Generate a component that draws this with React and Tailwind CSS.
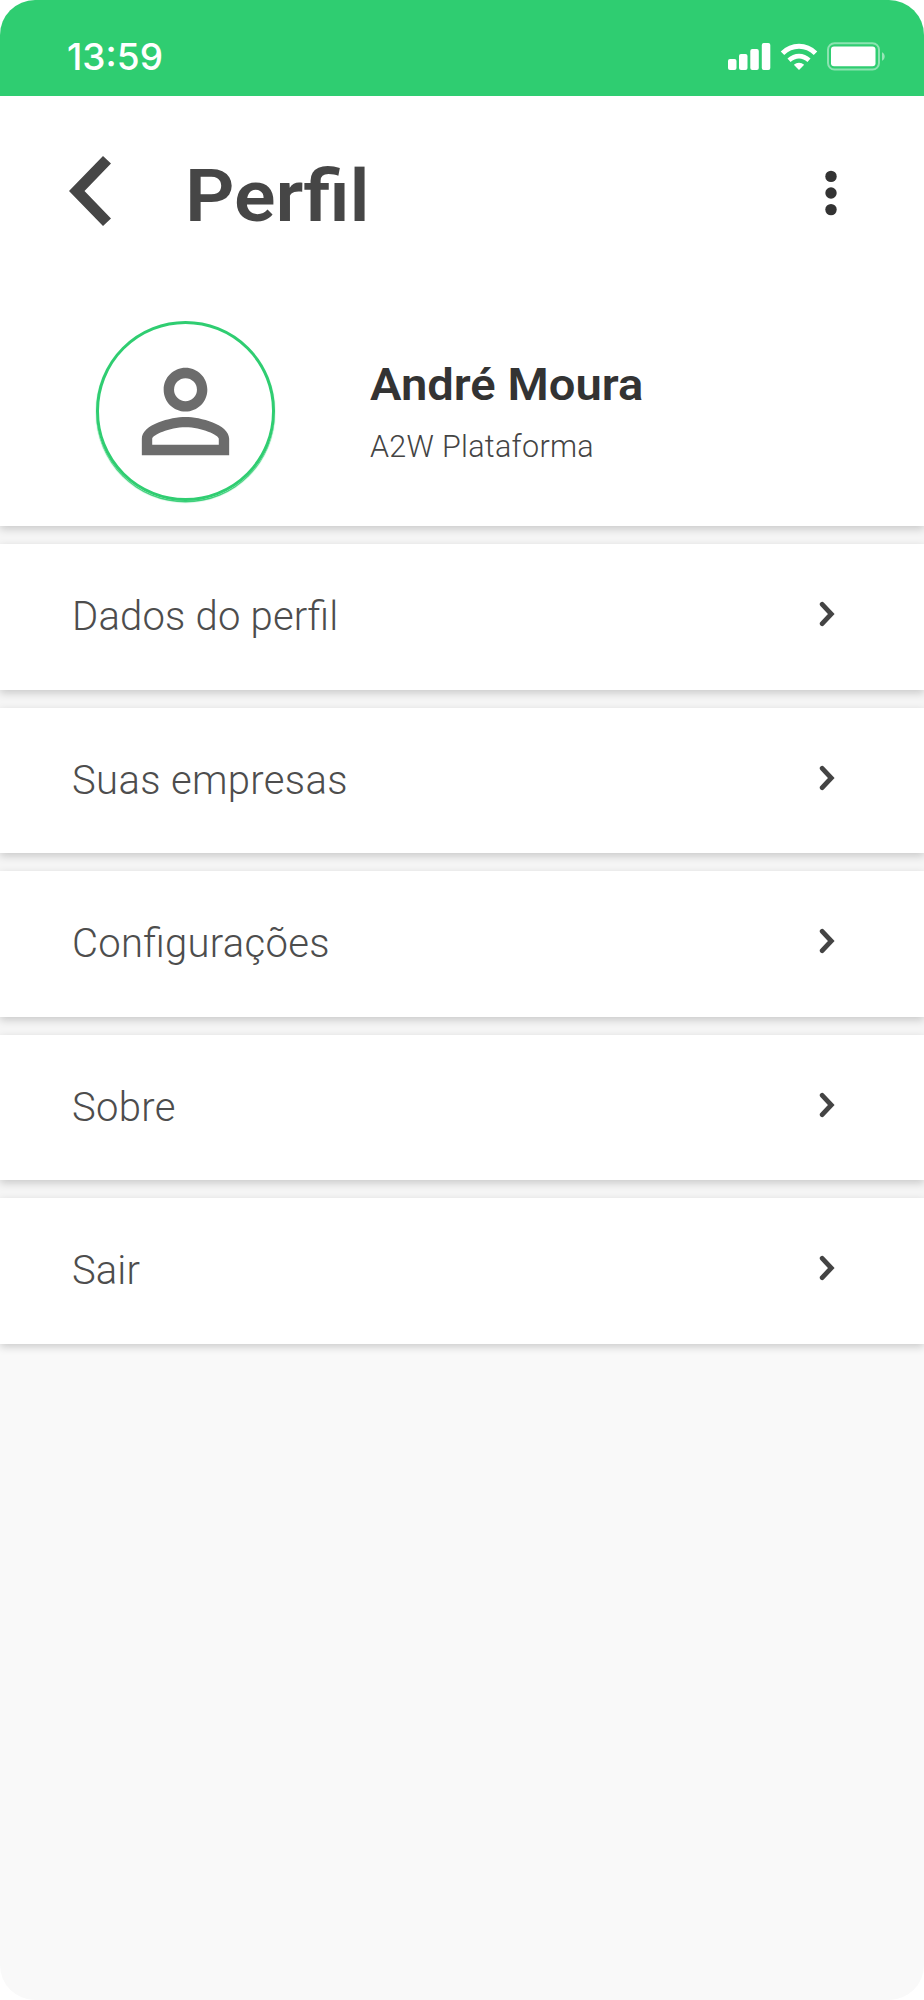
const menuItems = [
  { id: 'dados', label: 'Dados do perfil', tracking: 'tracking-[0.2px]' },
  { id: 'empresas', label: 'Suas empresas', tracking: 'tracking-[0.35px]' },
  { id: 'config', label: 'Configurações', tracking: 'tracking-[0.3px]' },
  { id: 'sobre', label: 'Sobre', tracking: 'tracking-[0.3px]' },
  { id: 'sair', label: 'Sair', tracking: 'tracking-[0.1px]' },
];

function StatusBar() {
  return (
    <div className="flex h-[95.5px] items-start justify-between bg-[#2fcd71] pl-[67px] pr-[38px] pt-[42px] text-white">
      <span className="font-['Inter'] text-[37px] font-medium leading-[29px]">13:59</span>
      <div className="flex h-[29px] items-start">
        <svg className="mr-[9px] h-[29px] w-[43px]" viewBox="0 0 43 29" fill="currentColor">
          <rect x="0" y="17" width="8.5" height="11" rx="2" />
          <rect x="11" y="12" width="8.5" height="16" rx="2" />
          <rect x="22.3" y="7" width="8.5" height="21" rx="2" />
          <rect x="33.8" y="1" width="8.5" height="27" rx="2" />
        </svg>
        <svg className="mr-[9px] h-[29px] w-[38px]" viewBox="0 0 38 29" fill="none" stroke="currentColor">
          <path d="M2.5 11.2C12 1.9 26 1.9 35.5 11.2" strokeWidth="5" />
          <path d="M9 18.2C15 12.7 23 12.7 29 18.2" strokeWidth="4.6" />
          <path d="M13.8 22.7C17 20 21 20 24.2 22.7L19 28Z" fill="currentColor" stroke="none" />
        </svg>
        <svg className="h-[29px] w-[59px]" viewBox="0 0 59 29">
          <rect x="1" y="1.2" width="51" height="26.3" rx="6.5" fill="none" stroke="#fff" strokeOpacity="0.45" strokeWidth="2" />
          <rect x="4" y="4.6" width="44.5" height="19.6" rx="3" fill="#fff" />
          <path d="M55 10.3c3.6 1.6 3.6 6.8 0 8.4z" fill="#fff" fillOpacity="0.5" />
        </svg>
      </div>
    </div>
  );
}

function Chevron() {
  return (
    <svg className="mb-[6px] h-[26px] w-[16px]" viewBox="0 0 16 26" fill="none" stroke="#444" strokeWidth="4.8" strokeLinecap="round">
      <path d="M3.2 3.3L12.3 13L3.2 22.7" />
    </svg>
  );
}

function MenuItem({ label, tracking }) {
  return (
    <button className="flex h-[145.5px] w-full shrink-0 items-center justify-between bg-white pl-[72px] pr-[89px] pt-[1px] shadow-[0_3px_8px_rgba(0,0,0,0.18)]">
      <span className={`text-[40px] font-light leading-[48px] text-[#4d4d4d] [font-feature-settings:'liga'] ${tracking}`}>
        {label}
      </span>
      <Chevron />
    </button>
  );
}

export default function App() {
  return (
    <div className="h-[2000px] w-[924px] bg-white">
      <div className="flex h-full flex-col overflow-hidden rounded-[35px] bg-[#f9f9f9] font-['Roboto',sans-serif]">
        <header className="relative h-[526px] shrink-0 bg-white shadow-[0_3px_8px_rgba(0,0,0,0.18)]">
          <StatusBar />

          <div className="flex h-[195px] items-center pl-[69px] pr-[87px]">
            <svg className="mb-[2px] h-[72px] w-[43px]" viewBox="0 0 43 72" fill="#464646">
              <path d="M0 34L34 -1L42 6.5L15.5 34L42 61.5L34 69Z" transform="translate(0 1)" />
            </svg>
            <h1 className="ml-[73px] origin-left scale-x-[1.065] pt-[8px] text-[72.5px] font-semibold leading-[86px] text-[#464646]">
              Perfil
            </h1>
            <svg className="ml-auto h-[46px] w-[12px]" viewBox="0 0 12 46" fill="#333">
              <circle cx="6" cy="6.4" r="5.7" />
              <circle cx="6" cy="23" r="5.7" />
              <circle cx="6" cy="39.6" r="5.7" />
            </svg>
          </div>

          <div className="flex pl-[96px] pt-[30.5px]">
            <div className="flex h-[180px] w-[179px] items-center justify-center rounded-full border-[3px] border-[#2fcd71] shadow-[0_1.5px_1px_#2fcd71]">
              <svg className="h-[131px] w-[131px]" viewBox="0 0 24 24" fill="#6c6c6c">
                <path d="M12 5.9a2.1 2.1 0 1 1 0 4.2 2.1 2.1 0 0 1 0-4.2m0 9c2.97 0 6.1 1.46 6.1 2.1v1.1H5.9V17c0-.64 3.13-2.1 6.1-2.1M12 4C9.79 4 8 5.79 8 8s1.79 4 4 4 4-1.79 4-4-1.79-4-4-4zm0 9c-2.67 0-8 1.34-8 4v3h16v-3c0-2.66-5.33-4-8-4z" />
              </svg>
            </div>
            <div className="ml-[95px] pt-[38px]">
              <h2 className="origin-left scale-x-[1.06] text-[44.5px] font-semibold leading-[53px] text-[#333]">André Moura</h2>
              <p className="mt-[17px] text-[30.5px] font-light leading-[36px] tracking-[0.3px] text-[#444]">A2W Plataforma</p>
            </div>
          </div>
        </header>

        {/* the strips between rows are a bit darker than the page */}
        <main className="flex flex-col gap-[18px] bg-[#f5f5f5] pt-[18px]">
          {menuItems.map((item) => (
            <MenuItem key={item.id} label={item.label} tracking={item.tracking} />
          ))}
        </main>
      </div>
    </div>
  );
}
